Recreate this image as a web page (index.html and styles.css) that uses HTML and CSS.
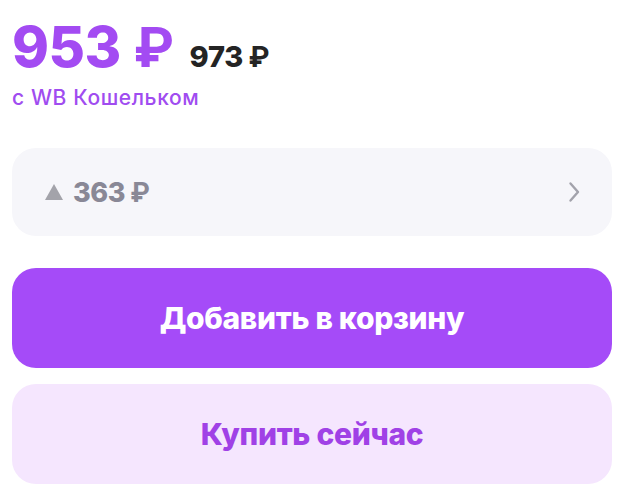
FILE: index.html
```html
<!DOCTYPE html>
<html lang="ru">
<head>
<meta charset="utf-8">
<link rel="stylesheet" href="styles.css">
</head>
<body>
<div class="panel">
  <div class="prices">
    <span class="price-main">953 <span class="rub">₽</span></span>
    <span class="price-old">973 <span class="rub">₽</span></span>
  </div>
  <div class="wallet">с WB Кошельком</div>
  <div class="history">
    <div class="history-value"><span class="tri"></span><span>363 <span class="rub">₽</span></span></div>
    <svg class="chev" width="14" height="22" viewBox="0 0 14 22"><path d="M2.5 2.5l7.5 8.5L2.5 19.5" fill="none" stroke="#a2a2ab" stroke-width="2.4" stroke-linecap="round" stroke-linejoin="round"/></svg>
  </div>
  <button class="btn btn-primary">Добавить в корзину</button>
  <button class="btn btn-secondary">Купить сейчас</button>
</div>
</body>
</html>
```
FILE: styles.css
```css
* { box-sizing: border-box; }
body {
  margin: 0;
  background: #fff;
  font-family: Inter, "Noto Sans", sans-serif;
}
.panel {
  padding: 12px 12px 0 12px;
  display: flex;
  flex-direction: column;
}
.prices {
  display: flex;
  align-items: baseline;
  gap: 16px;
  height: 70px;
}
.rub {
  font-family: Roboto, "Noto Sans", sans-serif;
  font-weight: 700;
}
.price-main {
  font-size: 56px;
  font-weight: 800;
  color: #a34bf2;
  letter-spacing: -0.5px;
  line-height: 70px;
}
.price-main .rub {
  margin-left: 2px;
}
.price-old {
  font-size: 29px;
  font-weight: 800;
  color: #242424;
  letter-spacing: -0.3px;
}
.wallet {
  margin-top: 2px;
  font-size: 21px;
  font-weight: 500;
  color: #a04cf0;
  letter-spacing: 0.6px;
  line-height: 28px;
}
.history {
  margin-top: 36px;
  height: 88px;
  border-radius: 24px;
  background: #f6f6fa;
  display: flex;
  align-items: center;
  justify-content: space-between;
  padding: 0 30px 0 33px;
}
.history-value {
  display: flex;
  align-items: center;
  gap: 10px;
  font-size: 27px;
  font-weight: 800;
  color: #898896;
  letter-spacing: -0.4px;
}
.tri {
  width: 0; height: 0;
  border-left: 9px solid transparent;
  border-right: 9px solid transparent;
  border-bottom: 16px solid #a3a3aa;
  margin-top: -1px;
}
.btn {
  border: 0;
  height: 100px;
  border-radius: 24px;
  font-family: inherit;
  font-size: 30px;
  font-weight: 800;
  letter-spacing: -0.3px;
}
.btn-primary {
  margin-top: 32px;
  background: #a54bf8;
  color: #fff;
}
.btn-secondary {
  margin-top: 16px;
  background: #f5e6fe;
  color: #a041e6;
}
```
